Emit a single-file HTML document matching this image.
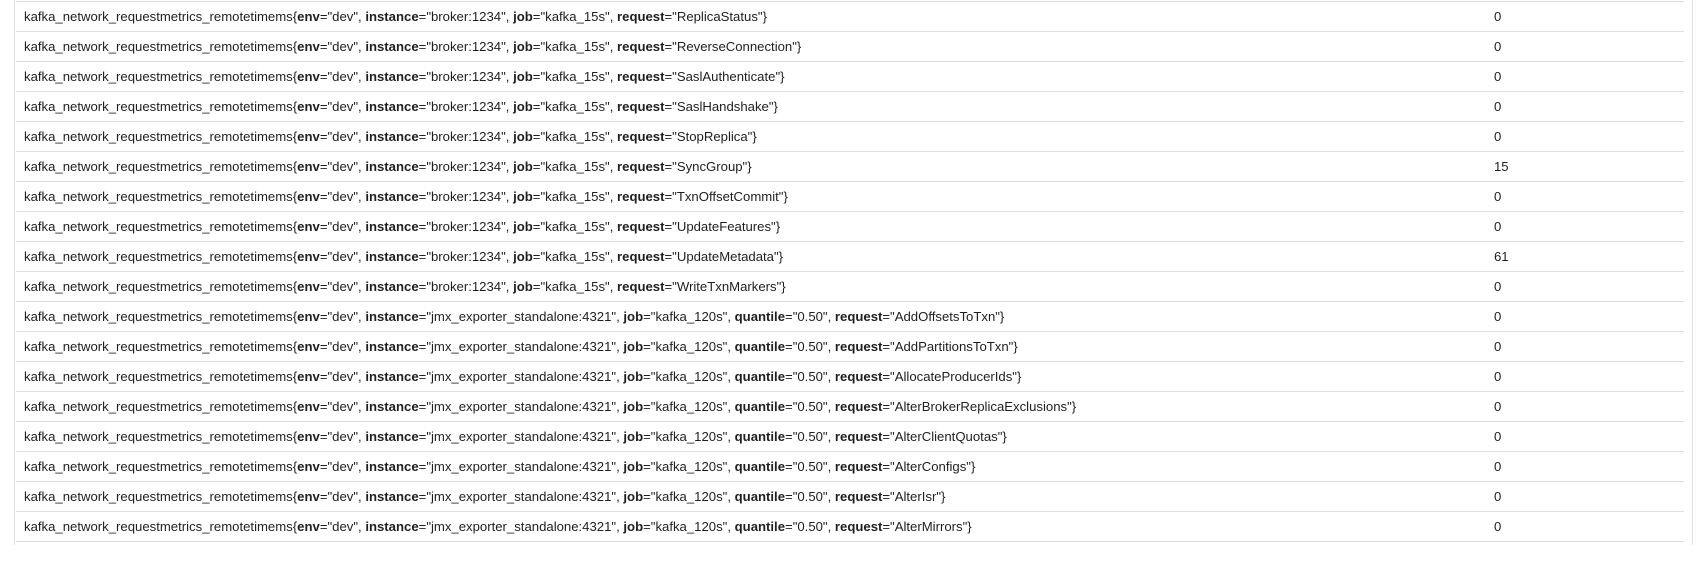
<!DOCTYPE html>
<html><head><style>
body{margin:0;background:#fff;width:1700px;height:545px;overflow:hidden;font-family:"Liberation Sans",Arial,sans-serif;font-size:13.15px;color:#1f1f1f}
.wrap{position:absolute;left:14px;top:0;width:1679px;height:545px;border-left:1px solid #e3e3e3;border-right:1px solid #e3e3e3;box-sizing:border-box}
.row{position:absolute;left:1px;width:1668px;height:30px;border-top:1px solid #dedede;box-sizing:border-box}
.l{position:absolute;left:8px;top:7px;white-space:nowrap}
.v{position:absolute;left:1478px;top:7px}
b{font-weight:bold}
</style></head><body><div class="wrap">
<div class="row" style="top:1px"><span class="l">kafka_network_requestmetrics_remotetimems{<b>env</b>="dev", <b>instance</b>="broker:1234", <b>job</b>="kafka_15s", <b>request</b>="ReplicaStatus"}</span><span class="v">0</span></div>
<div class="row" style="top:31px"><span class="l">kafka_network_requestmetrics_remotetimems{<b>env</b>="dev", <b>instance</b>="broker:1234", <b>job</b>="kafka_15s", <b>request</b>="ReverseConnection"}</span><span class="v">0</span></div>
<div class="row" style="top:61px"><span class="l">kafka_network_requestmetrics_remotetimems{<b>env</b>="dev", <b>instance</b>="broker:1234", <b>job</b>="kafka_15s", <b>request</b>="SaslAuthenticate"}</span><span class="v">0</span></div>
<div class="row" style="top:91px"><span class="l">kafka_network_requestmetrics_remotetimems{<b>env</b>="dev", <b>instance</b>="broker:1234", <b>job</b>="kafka_15s", <b>request</b>="SaslHandshake"}</span><span class="v">0</span></div>
<div class="row" style="top:121px"><span class="l">kafka_network_requestmetrics_remotetimems{<b>env</b>="dev", <b>instance</b>="broker:1234", <b>job</b>="kafka_15s", <b>request</b>="StopReplica"}</span><span class="v">0</span></div>
<div class="row" style="top:151px"><span class="l">kafka_network_requestmetrics_remotetimems{<b>env</b>="dev", <b>instance</b>="broker:1234", <b>job</b>="kafka_15s", <b>request</b>="SyncGroup"}</span><span class="v">15</span></div>
<div class="row" style="top:181px"><span class="l">kafka_network_requestmetrics_remotetimems{<b>env</b>="dev", <b>instance</b>="broker:1234", <b>job</b>="kafka_15s", <b>request</b>="TxnOffsetCommit"}</span><span class="v">0</span></div>
<div class="row" style="top:211px"><span class="l">kafka_network_requestmetrics_remotetimems{<b>env</b>="dev", <b>instance</b>="broker:1234", <b>job</b>="kafka_15s", <b>request</b>="UpdateFeatures"}</span><span class="v">0</span></div>
<div class="row" style="top:241px"><span class="l">kafka_network_requestmetrics_remotetimems{<b>env</b>="dev", <b>instance</b>="broker:1234", <b>job</b>="kafka_15s", <b>request</b>="UpdateMetadata"}</span><span class="v">61</span></div>
<div class="row" style="top:271px"><span class="l">kafka_network_requestmetrics_remotetimems{<b>env</b>="dev", <b>instance</b>="broker:1234", <b>job</b>="kafka_15s", <b>request</b>="WriteTxnMarkers"}</span><span class="v">0</span></div>
<div class="row" style="top:301px"><span class="l">kafka_network_requestmetrics_remotetimems{<b>env</b>="dev", <b>instance</b>="jmx_exporter_standalone:4321", <b>job</b>="kafka_120s", <b>quantile</b>="0.50", <b>request</b>="AddOffsetsToTxn"}</span><span class="v">0</span></div>
<div class="row" style="top:331px"><span class="l">kafka_network_requestmetrics_remotetimems{<b>env</b>="dev", <b>instance</b>="jmx_exporter_standalone:4321", <b>job</b>="kafka_120s", <b>quantile</b>="0.50", <b>request</b>="AddPartitionsToTxn"}</span><span class="v">0</span></div>
<div class="row" style="top:361px"><span class="l">kafka_network_requestmetrics_remotetimems{<b>env</b>="dev", <b>instance</b>="jmx_exporter_standalone:4321", <b>job</b>="kafka_120s", <b>quantile</b>="0.50", <b>request</b>="AllocateProducerIds"}</span><span class="v">0</span></div>
<div class="row" style="top:391px"><span class="l">kafka_network_requestmetrics_remotetimems{<b>env</b>="dev", <b>instance</b>="jmx_exporter_standalone:4321", <b>job</b>="kafka_120s", <b>quantile</b>="0.50", <b>request</b>="AlterBrokerReplicaExclusions"}</span><span class="v">0</span></div>
<div class="row" style="top:421px"><span class="l">kafka_network_requestmetrics_remotetimems{<b>env</b>="dev", <b>instance</b>="jmx_exporter_standalone:4321", <b>job</b>="kafka_120s", <b>quantile</b>="0.50", <b>request</b>="AlterClientQuotas"}</span><span class="v">0</span></div>
<div class="row" style="top:451px"><span class="l">kafka_network_requestmetrics_remotetimems{<b>env</b>="dev", <b>instance</b>="jmx_exporter_standalone:4321", <b>job</b>="kafka_120s", <b>quantile</b>="0.50", <b>request</b>="AlterConfigs"}</span><span class="v">0</span></div>
<div class="row" style="top:481px"><span class="l">kafka_network_requestmetrics_remotetimems{<b>env</b>="dev", <b>instance</b>="jmx_exporter_standalone:4321", <b>job</b>="kafka_120s", <b>quantile</b>="0.50", <b>request</b>="AlterIsr"}</span><span class="v">0</span></div>
<div class="row" style="top:511px"><span class="l">kafka_network_requestmetrics_remotetimems{<b>env</b>="dev", <b>instance</b>="jmx_exporter_standalone:4321", <b>job</b>="kafka_120s", <b>quantile</b>="0.50", <b>request</b>="AlterMirrors"}</span><span class="v">0</span></div>
<div class="row" style="top:541px"></div>
</div></body></html>
